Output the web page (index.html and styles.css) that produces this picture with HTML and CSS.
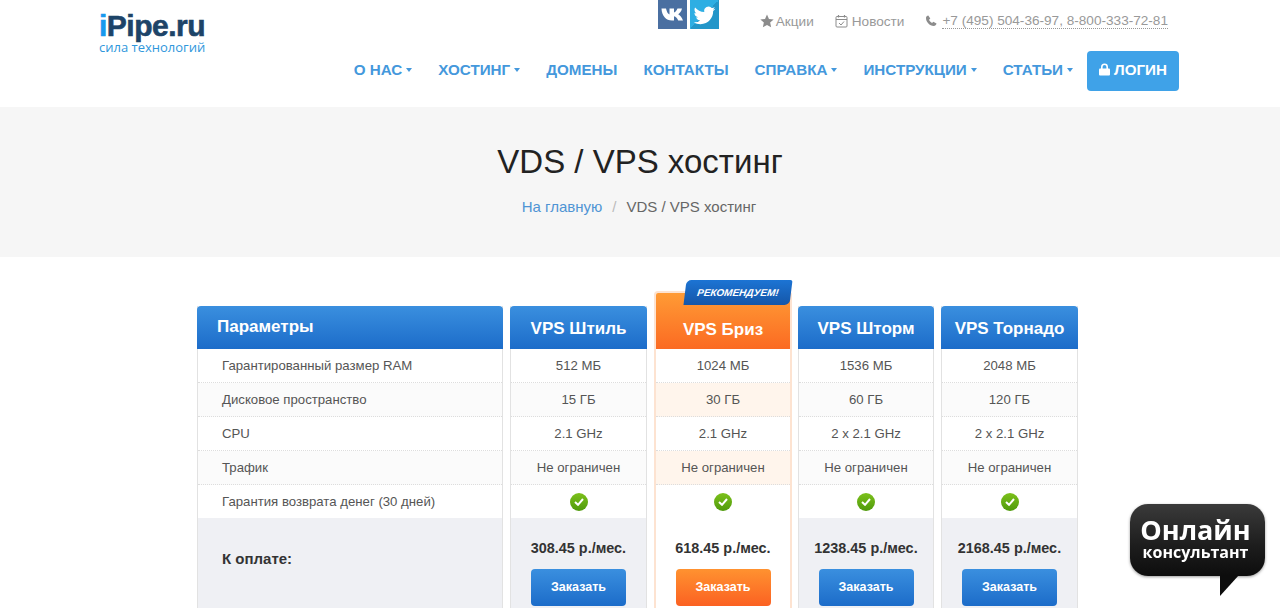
FILE: index.html
```html
<!DOCTYPE html>
<html lang="ru">
  <head>
    <meta charset="UTF-8" />
    <title>VDS / VPS хостинг</title>
    <link rel="stylesheet" href="styles.css">
  </head>
  <body>
    <header class="top">
      <div class="logo">
        <div class="logo-name"><span class="logo-i">i</span>Pipe.ru</div>
        <div class="logo-sub">сила технологий</div>
      </div>
      <div class="top-right">
        <div class="top-line">
          <div class="social">
            <a class="soc soc-vk" href="#">
              <svg width="29" height="29" viewBox="0 0 29 29"><path d="M3.500 8.500h4.500c.8 3.500 2 5.500 3.500 6V8.500h4.500v4c1.500-.5 2.800-2.200 3.500-4h4.500c-.6 2.800-2.200 4.800-3.800 5.800 1.800 1 3.600 2.800 4.800 6.200h-4.800c-.8-2.300-2.300-3.800-4.200-4.200v4.200h-2C8 20.500 3.800 16 3.500 8.500z" fill="#fff"/></svg>
            </a>
            <a class="soc soc-tw" href="#">
              <svg width="29" height="29" viewBox="-4 -5 32 32"><path fill="#fff" d="M23.953 4.570a10 10 0 01-2.825.775 4.958 4.958 0 002.163-2.723c-.951.555-2.005.959-3.127 1.184a4.920 4.920 0 00-8.384 4.482C7.690 8.095 4.067 6.130 1.640 3.162a4.822 4.822 0 00-.666 2.475c0 1.710.870 3.213 2.188 4.096a4.904 4.904 0 01-2.228-.616v.060a4.923 4.923 0 003.946 4.827 4.996 4.996 0 01-2.212.085 4.936 4.936 0 004.604 3.417 9.867 9.867 0 01-6.102 2.105c-.390 0-.779-.023-1.170-.067a13.995 13.995 0 007.557 2.209c9.053 0 13.998-7.496 13.998-13.985 0-.210 0-.420-.015-.630A9.935 9.935 0 0024 4.590z"/></svg>
            </a>
          </div>
          <a class="info info-first" href="#">
            <svg width="14" height="14" viewBox="0 0 24 24"><path fill="#8c8c8c" d="M12 1l3.400 7.400 8 .9-6 5.400 1.700 8L12 18.700l-7.100 4 1.700-8-6-5.400 8-.9z"/></svg>
            Акции
          </a>
          <a class="info info-news" href="#">
            <svg width="13" height="14" viewBox="0 0 13 14"><rect x="1" y="2.500" width="11" height="10.500" rx="1" fill="none" stroke="#8c8c8c"/><path d="M1 5.500h11M3.500 1v2.500M9.500 1v2.500" stroke="#8c8c8c" fill="none" stroke-width="1.200"/><path d="M4 9l2 2 3-3.500" stroke="#8c8c8c" fill="none"/></svg>
            Новости
          </a>
          <span class="info info-phone">
            <svg width="12" height="12" viewBox="0 0 24 24"><path fill="#8c8c8c" d="M6.600 1l4 6-2.500 2.600c1 2.600 3.200 4.900 6 6.200l2.500-2.500 6.400 3.700c-.5 2.600-2.700 5-5.300 5C9 22 1.500 13.500 2 5.600 2.200 3.500 4 1.600 6.600 1z"/></svg>
            <span class="phones">+7 (495) 504-36-97, 8-800-333-72-81</span>
          </span>
        </div>
        <nav class="menu">
          <a href="#">О НАС<i class="caret"></i></a>
          <a href="#">ХОСТИНГ<i class="caret"></i></a>
          <a href="#">ДОМЕНЫ</a>
          <a href="#">КОНТАКТЫ</a>
          <a href="#">СПРАВКА<i class="caret"></i></a>
          <a href="#">ИНСТРУКЦИИ<i class="caret"></i></a>
          <a href="#">СТАТЬИ<i class="caret"></i></a>
          <a class="login" href="#">
            <svg width="11" height="13" viewBox="0 0 11 13"><path d="M2.800 6V4a2.700 2.700 0 015.400 0v2" fill="none" stroke="#fff" stroke-width="1.600"/><rect y="5.500" width="11" height="7" rx="1" fill="#fff"/></svg>
            ЛОГИН
          </a>
        </nav>
      </div>
    </header>

    <section class="band">
      <h1>VDS / VPS хостинг</h1>
      <p class="crumbs"><a href="#">На главную</a><span class="sep">/</span>VDS / VPS хостинг</p>
    </section>

    <section class="plans">
      <div class="col col-params">
        <div class="head">Параметры</div>
        <div class="row">Гарантированный размер RAM</div>
        <div class="row row-alt">Дисковое пространство</div>
        <div class="row">CPU</div>
        <div class="row row-alt">Трафик</div>
        <div class="row">Гарантия возврата денег (30 дней)</div>
        <div class="foot"><b class="foot-label">К оплате:</b></div>
      </div>

      <div class="col">
        <div class="head">VPS Штиль</div>
        <div class="row">512 МБ</div>
        <div class="row row-alt">15 ГБ</div>
        <div class="row">2.1 GHz</div>
        <div class="row row-alt">Не ограничен</div>
        <div class="row"><i class="ok"><svg width="10" height="8" viewBox="0 0 10 8"><path d="M1 4l3 2.800L9 1" fill="none" stroke="#fff" stroke-width="2"/></svg></i></div>
        <div class="foot"><div class="price">308.45 р./мес.</div><a class="order" href="#">Заказать</a></div>
      </div>

      <div class="col col-best">
        <div class="ribbon"><span>Рекомендуем!</span></div>
        <div class="head">VPS Бриз</div>
        <div class="row">1024 МБ</div>
        <div class="row row-alt">30 ГБ</div>
        <div class="row">2.1 GHz</div>
        <div class="row row-alt">Не ограничен</div>
        <div class="row"><i class="ok"><svg width="10" height="8" viewBox="0 0 10 8"><path d="M1 4l3 2.800L9 1" fill="none" stroke="#fff" stroke-width="2"/></svg></i></div>
        <div class="foot"><div class="price">618.45 р./мес.</div><a class="order" href="#">Заказать</a></div>
      </div>

      <div class="col">
        <div class="head">VPS Шторм</div>
        <div class="row">1536 МБ</div>
        <div class="row row-alt">60 ГБ</div>
        <div class="row">2 x 2.1 GHz</div>
        <div class="row row-alt">Не ограничен</div>
        <div class="row"><i class="ok"><svg width="10" height="8" viewBox="0 0 10 8"><path d="M1 4l3 2.800L9 1" fill="none" stroke="#fff" stroke-width="2"/></svg></i></div>
        <div class="foot"><div class="price">1238.45 р./мес.</div><a class="order" href="#">Заказать</a></div>
      </div>

      <div class="col">
        <div class="head">VPS Торнадо</div>
        <div class="row">2048 МБ</div>
        <div class="row row-alt">120 ГБ</div>
        <div class="row">2 x 2.1 GHz</div>
        <div class="row row-alt">Не ограничен</div>
        <div class="row"><i class="ok"><svg width="10" height="8" viewBox="0 0 10 8"><path d="M1 4l3 2.800L9 1" fill="none" stroke="#fff" stroke-width="2"/></svg></i></div>
        <div class="foot"><div class="price">2168.45 р./мес.</div><a class="order" href="#">Заказать</a></div>
      </div>
    </section>

    <a class="chat" href="#">
      <span class="chat-big">Онлайн</span>
      <span class="chat-small">консультант</span>
    </a>
  </body>
</html>
```

FILE: styles.css
```css
* {
  box-sizing: border-box;
  margin: 0;
}
html {
  overflow: hidden;
}
body {
  font-family: "Liberation Sans", Arial, sans-serif;
  font-size: 14px;
  color: #555;
  background: #fff;
}
a {
  text-decoration: none;
  color: inherit;
}

/* шапка */
.top {
  height: 107px;
  padding: 0 101px 0 99px;
  display: flex;
  justify-content: space-between;
}
.logo {
  padding-top: 11px;
  width: 107px;
}
.logo-name {
  font-weight: bold;
  font-size: 30px;
  line-height: 30px;
  letter-spacing: -0.5px;
  -webkit-text-stroke: 0.6px #1d4468;
  color: #1d4468;
  white-space: nowrap;
}
.logo-i {
  color: #1898ee;
  -webkit-text-stroke: 0.6px #1898ee;
}
.logo-sub {
  font-family: "Open Sans", sans-serif;
  font-size: 13px;
  line-height: 12px;
  color: #2f97dc;
  white-space: nowrap;
}
.top-right {
  display: flex;
  flex-direction: column;
  align-items: flex-end;
}
.top-line {
  display: flex;
  align-items: flex-start;
  height: 51px;
  margin-right: 11px;
  font-size: 13.600px;
}
.social {
  display: flex;
  gap: 3px;
  margin-right: 41px;
}
.soc {
  display: block;
  width: 29px;
  height: 29px;
}
.soc-vk {
  background: #4a6fa1;
}
.soc-tw {
  background: linear-gradient(135deg, #2eaee3 50%, #2396c9 50%);
}
.info {
  display: flex;
  align-items: center;
  gap: 2px;
  margin-top: 13px;
  height: 16px;
  color: #999;
  white-space: nowrap;
}
.info-news {
  margin-left: 21px;
  gap: 4px;
}
.info-phone {
  margin-left: 21px;
  gap: 5px;
}
.phones {
  border-bottom: 1px dotted #999;
  line-height: 15px;
}
.menu {
  display: flex;
  align-items: center;
  gap: 26px;
  font-size: 15.200px;
  font-weight: bold;
  color: #4498dc;
  white-space: nowrap;
}
.menu a {
  padding-bottom: 4px;
}
.caret {
  display: inline-block;
  margin-left: 4px;
  vertical-align: 3px;
  border-top: 4px solid #4498dc;
  border-left: 3.500px solid transparent;
  border-right: 3.500px solid transparent;
}
.menu .login {
  display: flex;
  align-items: center;
  justify-content: center;
  gap: 4px;
  width: 92px;
  height: 40px;
  margin-left: -12px;
  border-radius: 4px;
  background: #3fa2e8;
  color: #fff;
}

/* заголовок */
.band {
  height: 150px;
  background: #f6f6f6;
  text-align: center;
  padding-top: 34px;
}
.band h1 {
  font-size: 33px;
  line-height: 42px;
  font-weight: normal;
  color: #222;
}
.crumbs {
  margin-top: 14px;
  padding-right: 2px;
  font-size: 15px;
  line-height: 20px;
  color: #666;
}
.crumbs a {
  color: #4f94d4;
}
.sep {
  margin: 0 10px;
  color: #bbb;
}

/* тарифы */
.plans {
  display: grid;
  grid-template-columns: 306px 137px 137px 136px 137px;
  column-gap: 7px;
  align-items: end;
  padding: 34px 0 0 197px;
}
.col {
  position: relative;
  text-align: center;
  border: solid #e2e2e2;
  border-width: 0 1px;
}
.head {
  height: 43px;
  margin: 0 -1px;
  border-radius: 4px 4px 0 0;
  background: linear-gradient(#3a8fdf, #1c6cc9);
  color: #fff;
  font-size: 17px;
  font-weight: bold;
  line-height: 45px;
}
.col-params {
  text-align: left;
}
.col-params .head {
  padding-left: 20px;
  line-height: 42px;
}
.row {
  height: 34px;
  border-bottom: 1px dotted #ddd;
  line-height: 33px;
  font-size: 13.200px;
  background: #fff;
  white-space: nowrap;
}
.col-params .row {
  padding-left: 24px;
}
.row-alt {
  background: #fbfbfb;
}
.ok {
  display: inline-flex;
  align-items: center;
  justify-content: center;
  width: 18px;
  height: 18px;
  margin-top: 8px;
  border-radius: 50%;
  background: linear-gradient(#7cc11b, #4f9a0c);
}
.foot {
  height: 130px;
  margin-top: -1px;
  padding-top: 21px;
  background: #eff0f4;
  text-align: center;
}
.foot-label {
  display: block;
  padding: 11px 0 0 24px;
  text-align: left;
  font-size: 15px;
  color: #333;
}
.price {
  font-size: 14.400px;
  font-weight: bold;
  line-height: 18px;
  color: #333;
}
.order {
  display: block;
  width: 95px;
  height: 37px;
  margin: 12px auto 0;
  border-radius: 4px;
  background: linear-gradient(#3a8fdf, #1c6cc9);
  color: #fff;
  font-size: 12.500px;
  font-weight: bold;
  line-height: 36px;
}

/* рекомендуем */
.col-best {
  margin-right: -1px;
  border-color: #fde3d1;
  border-width: 2px 2px 0;
  border-radius: 4px 4px 0 0;
}
.col-best .head {
  height: 56px;
  margin: 0;
  padding-top: 14px;
  border-radius: 2px 2px 0 0;
  background: linear-gradient(#ff9b35, #fb6a22);
}
.col-best .row-alt {
  background: #fff5ec;
}
.col-best .foot {
  background: #fff;
}
.col-best .order {
  background: linear-gradient(#ff9230, #fb6122);
}
.ribbon {
  position: absolute;
  top: -13px;
  right: -1px;
  width: 106px;
  height: 25px;
  border-radius: 5px 2px 5px 0;
  background: linear-gradient(#1c74d4, #1556a8);
  transform: skewX(-7deg);
  text-align: center;
}
.ribbon span {
  display: block;
  font-size: 10px;
  font-weight: bold;
  font-style: italic;
  line-height: 25px;
  text-transform: uppercase;
  color: #fff;
}

/* чат */
.chat {
  position: fixed;
  left: 1130px;
  top: 504px;
  width: 135px;
  height: 72px;
  padding: 13px 4px 0 0;
  border-radius: 18px;
  background: linear-gradient(#3a3a3a, #1c1c1c 60%, #0d0d0d);
  box-shadow: 0 1px 3px rgba(0, 0, 0, 0.4);
  color: #fff;
  text-align: center;
  font-family: "Open Sans", sans-serif;
  font-weight: 700;
}
.chat::after {
  content: "";
  position: absolute;
  left: 90px;
  top: 71px;
  width: 19px;
  height: 21px;
  background: #0d0d0d;
  clip-path: polygon(0 0, 100% 0, 0 100%);
}
.chat-big {
  display: block;
  font-size: 27px;
  line-height: 26px;
}
.chat-small {
  display: block;
  font-size: 16px;
  line-height: 18px;
}
```
